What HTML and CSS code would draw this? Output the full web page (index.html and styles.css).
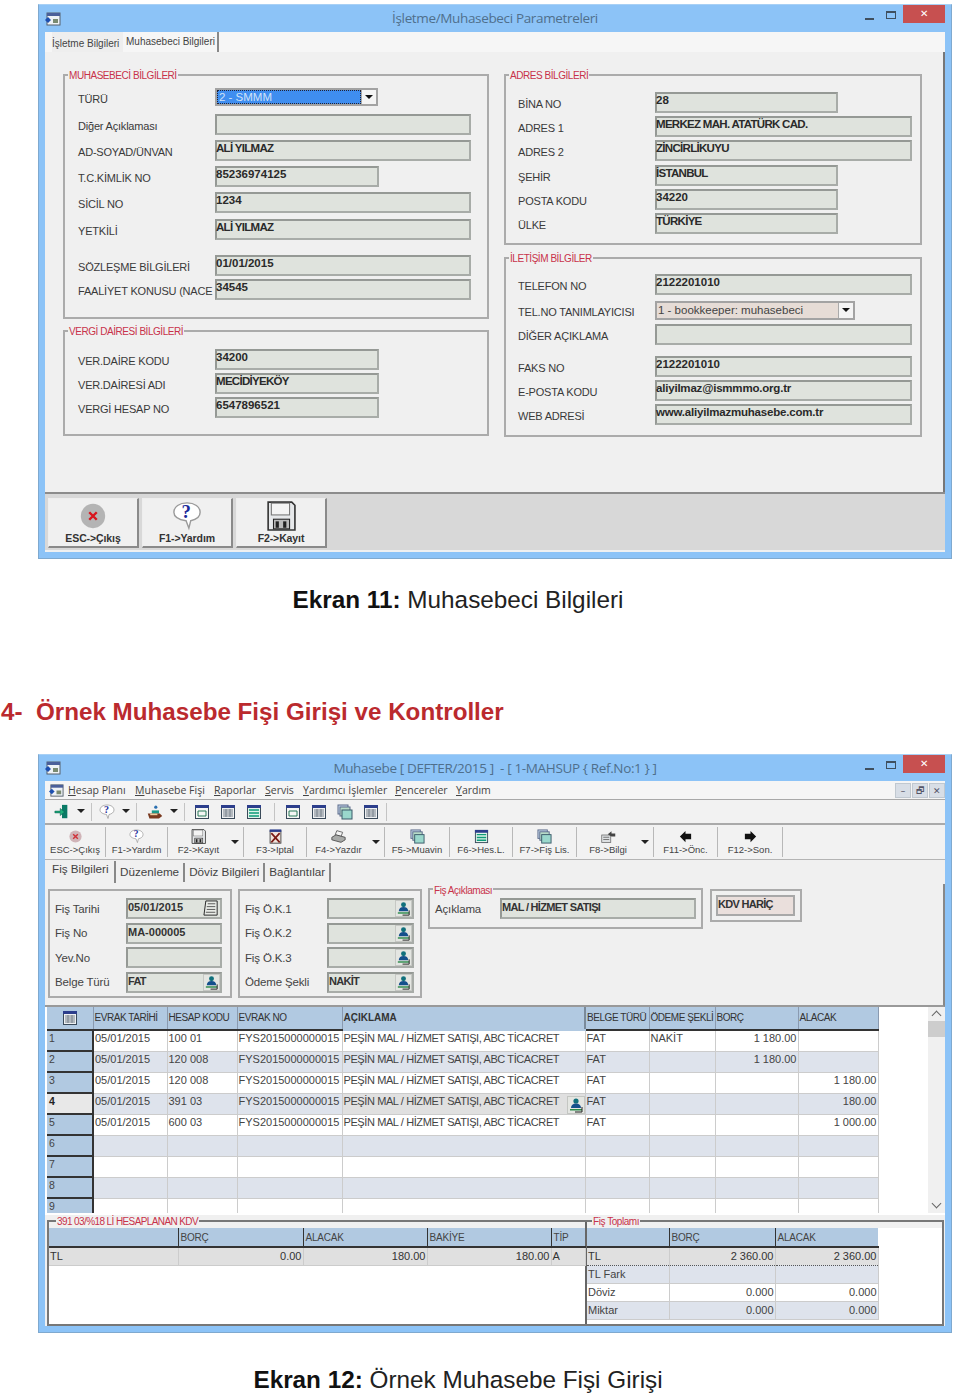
FILE: index.html
```html
<!DOCTYPE html>
<html lang="tr">
  <head>
    <meta charset="UTF-8" />
    <title>Muhasebe</title>
    <link rel="stylesheet" href="styles.css">
  </head>
  <body>
    <svg class="defs" width="0" height="0">
      <symbol id="i-app" viewBox="0 0 16 16">
        <rect x="2" y="2" width="13" height="12" fill="#eef2f6" stroke="#55606c"/>
        <rect x="2" y="2" width="13" height="3" fill="#4a5f9a"/>
        <rect x="8" y="8" width="5" height="4" fill="#7a8a70"/>
        <path d="M0 9l3-3 3 3-3 3z" fill="#1c4fb0"/>
      </symbol>
      <symbol id="i-lookup" viewBox="0 0 18 18">
        <rect x="0.5" y="0.5" width="17" height="17" fill="#e4e6e2" stroke="#c4c6c2"/>
        <circle cx="9" cy="5" r="2.6" fill="#10707c"/>
        <path d="M4 12c0-3 2-4.5 5-4.5s5 1.5 5 4.5z" fill="#14508c"/>
        <path d="M3 13h12v1.500H3z" fill="#2a8a4a"/>
        <path d="M15 11v5H8" fill="none" stroke="#222"/>
      </symbol>
      <symbol id="i-bubble" viewBox="0 0 32 32">
        <path d="M16 2c8 0 14 4 14 10 0 5-5 8-10 9l-2 8-3-8C8 20 2 17 2 12 2 6 8 2 16 2z" fill="#fff" stroke="#9a9a9a" stroke-width="1.500"/>
      </symbol>
      <symbol id="i-floppy" viewBox="0 0 28 28">
        <path d="M2 1h22l3 3v23H2z" fill="#e6e8ea" stroke="#333" stroke-width="1.500"/>
        <rect x="5" y="2" width="17" height="11" fill="#f4f4f4" stroke="#777"/>
        <rect x="7" y="17" width="15" height="9" fill="#bbb" stroke="#222"/>
        <rect x="9" y="19" width="3" height="6" fill="#222"/>
        <rect x="16" y="19" width="3" height="6" fill="#222"/>
      </symbol>
      <symbol id="i-exit" viewBox="0 0 18 18">
        <path d="M9 1h6v15H9z" fill="#0a7a66"/>
        <path d="M1 8h6V5l5 4-5 4v-3H1z" fill="#1fae7c" stroke="#075c4c" stroke-width=".6"/>
      </symbol>
      <symbol id="i-hand" viewBox="0 0 20 18">
        <circle cx="11" cy="3" r="2" fill="#2a6fb0"/>
        <path d="M6 7h9v4H6z" fill="#1c9a8a"/>
        <path d="M1 11h15l3 3-4 3H3z" fill="#7a3a20"/>
        <path d="M4 12h9" stroke="#f2d0a0" stroke-width="2"/>
      </symbol>
      <symbol id="i-form" viewBox="0 0 16 16">
        <rect x="1.500" y="1.500" width="13" height="13" fill="#f4f6f4" stroke="#3a4a5a"/>
        <rect x="1" y="1" width="14" height="3" fill="#2c3e8c"/>
        <path d="M4 7h8v5H4z" fill="none" stroke="#2a7a5a"/>
      </symbol>
      <symbol id="i-table" viewBox="0 0 16 16">
        <rect x="1.500" y="1.500" width="13" height="13" fill="#dff3ea" stroke="#3a4a5a"/>
        <rect x="1" y="1" width="14" height="3" fill="#2c3e8c"/>
        <path d="M3 6h10M3 9h10M3 12h10" stroke="#0e9a78" stroke-width="1.500"/>
      </symbol>
      <symbol id="i-sheet" viewBox="0 0 16 16">
        <rect x="1.500" y="1.500" width="13" height="13" fill="#eef0f2" stroke="#3a4a5a"/>
        <rect x="1" y="1" width="14" height="3" fill="#2c3e8c"/>
        <path d="M3 6h10M3 8h10M3 10h10M3 12h10M6 5v8M10 5v8" stroke="#77808a"/>
      </symbol>
      <symbol id="i-stack" viewBox="0 0 16 16">
        <rect x="1" y="1" width="10" height="9" fill="#c8d8ec" stroke="#5a6a8a"/>
        <rect x="3" y="3" width="10" height="9" fill="#b8dcc8" stroke="#5a6a8a"/>
        <rect x="5" y="6" width="10" height="9" fill="#9ad8cc" stroke="#3a5a6a"/>
      </symbol>
      <symbol id="i-print" viewBox="0 0 18 16">
        <path d="M7 1l7 2-2 5-7-2z" fill="#f4f4f4" stroke="#555"/>
        <path d="M1 9l5-3 11 3v3l-5 3-11-3z" fill="#a8aaa8" stroke="#444"/>
      </symbol>
      <symbol id="i-cancel" viewBox="0 0 16 18">
        <rect x="1.500" y="2" width="13" height="15" fill="#f2e4dc" stroke="#333"/>
        <rect x="1" y="0.500" width="14" height="3" fill="#2c3e8c"/>
        <path d="M3 5l10 11M13 5L3 16" stroke="#7a1a14" stroke-width="2"/>
      </symbol>
      <symbol id="i-info" viewBox="0 0 20 18">
        <rect x="1" y="7" width="12" height="10" fill="#dde0e2" stroke="#666"/>
        <path d="M3 10h8M3 13h8" stroke="#555"/>
        <path d="M9 6l5-4v3h5v4h-5" fill="#444"/>
      </symbol>
      <symbol id="i-cal" viewBox="0 0 18 18">
        <path d="M3 1h12v15H1z" fill="#e8ebe6" stroke="#222"/>
        <path d="M5 4h8M4 7h9M4 10h9M3 13h10" stroke="#555"/>
      </symbol>
    </svg>

    <!-- parametre penceresi -->
    <div class="win win-one">
      <div class="titlebar tall">
        <svg class="app-icon"><use href="#i-app"/></svg>
        <div class="title">İşletme/Muhasebeci Parametreleri</div>
        <div class="winbtns">
          <span class="wmin"></span>
          <span class="wmax"></span>
          <span class="wclose">✕</span>
        </div>
      </div>

      <div class="tabstrip">
        <span class="ptab">İşletme Bilgileri</span>
        <span class="ptab active">Muhasebeci Bilgileri</span>
      </div>

      <div class="params">
        <div class="pcol">
          <div class="fbox box-muh">
            <span class="legend">MUHASEBECİ BİLGİLERİ</span>
            <div class="frow">
              <label class="flabel">TÜRÜ</label>
              <div class="combo combo-sel"><span class="combo-val">2 - SMMM</span><span class="combo-arrow"></span></div>
            </div>
            <div class="frow mt8"><label class="flabel">Diğer Açıklaması</label><div class="field w256"></div></div>
            <div class="frow mt5"><label class="flabel">AD-SOYAD/ÜNVAN</label><div class="field w256 caps">ALİ YILMAZ</div></div>
            <div class="frow mt5"><label class="flabel">T.C.KİMLİK NO</label><div class="field w164">85236974125</div></div>
            <div class="frow mt5"><label class="flabel">SİCİL NO</label><div class="field w256">1234</div></div>
            <div class="frow mt6"><label class="flabel">YETKİLİ</label><div class="field w256 caps">ALİ YILMAZ</div></div>
            <div class="frow mt15"><label class="flabel">SÖZLEŞME BİLGİLERİ</label><div class="field w256">01/01/2015</div></div>
            <div class="frow mt3"><label class="flabel">FAALİYET KONUSU (NACE</label><div class="field w256">34545</div></div>
          </div>

          <div class="fbox box-ver">
            <span class="legend">VERGİ DAİRESİ BİLGİLERİ</span>
            <div class="frow"><label class="flabel">VER.DAİRE KODU</label><div class="field w164">34200</div></div>
            <div class="frow mt3"><label class="flabel">VER.DAİRESİ ADI</label><div class="field w164 caps">MECİDİYEKÖY</div></div>
            <div class="frow mt3"><label class="flabel">VERGİ HESAP NO</label><div class="field w164">6547896521</div></div>
          </div>
        </div>

        <div class="pcol">
          <div class="fbox box-adr">
            <span class="legend">ADRES BİLGİLERİ</span>
            <div class="frow"><label class="flabel">BİNA NO</label><div class="field w183">28</div></div>
            <div class="frow mt3"><label class="flabel">ADRES 1</label><div class="field w257 caps">MERKEZ MAH. ATATÜRK CAD.</div></div>
            <div class="frow mt3"><label class="flabel">ADRES 2</label><div class="field w257 caps">ZİNCİRLİKUYU</div></div>
            <div class="frow mt4"><label class="flabel">ŞEHİR</label><div class="field w183 caps">İSTANBUL</div></div>
            <div class="frow mt3"><label class="flabel">POSTA KODU</label><div class="field w183">34220</div></div>
            <div class="frow mt3"><label class="flabel">ÜLKE</label><div class="field w183 caps">TÜRKİYE</div></div>
          </div>

          <div class="fbox box-ilt">
            <span class="legend">İLETİŞİM BİLGİLER</span>
            <div class="frow"><label class="flabel">TELEFON NO</label><div class="field w257">2122201010</div></div>
            <div class="frow mt6">
              <label class="flabel">TEL.NO TANIMLAYICISI</label>
              <div class="combo combo-book"><span class="combo-val">1 - bookkeeper: muhasebeci</span><span class="combo-arrow"></span></div>
            </div>
            <div class="frow mt4"><label class="flabel">DİĞER AÇIKLAMA</label><div class="field w257"></div></div>
            <div class="frow mt11"><label class="flabel">FAKS NO</label><div class="field w257">2122201010</div></div>
            <div class="frow mt3"><label class="flabel">E-POSTA KODU</label><div class="field w257 lower">aliyilmaz@ismmmo.org.tr</div></div>
            <div class="frow mt3"><label class="flabel">WEB ADRESİ</label><div class="field w257 lower">www.aliyilmazmuhasebe.com.tr</div></div>
          </div>
        </div>
      </div>

      <div class="bottombar">
        <button class="bigbtn">
          <svg class="big-ico" viewBox="0 0 32 32"><circle cx="16" cy="16" r="13" fill="#b4b4b4"/><path d="M12 12l8 8M20 12l-8 8" stroke="#d8141c" stroke-width="2.600"/></svg>
          <span>ESC-&gt;Çıkış</span>
        </button>
        <button class="bigbtn">
          <svg class="big-ico" viewBox="0 0 32 32"><use href="#i-bubble" width="32" height="32"/><text x="15" y="18" class="help-mark">?</text></svg>
          <span>F1-&gt;Yardım</span>
        </button>
        <button class="bigbtn">
          <svg class="big-ico"><use href="#i-floppy"/></svg>
          <span>F2-&gt;Kayıt</span>
        </button>
      </div>
    </div>

    <p class="caption"><b>Ekran 11:</b> Muhasebeci Bilgileri</p>

    <h2 class="section">4-&nbsp; Örnek Muhasebe Fişi Girişi ve Kontroller</h2>

    <!-- fis penceresi -->
    <div class="win win-two">
      <div class="titlebar">
        <svg class="app-icon"><use href="#i-app"/></svg>
        <div class="title">Muhasebe [ DEFTER/2015 ]&nbsp; - [ 1-MAHSUP { Ref.No:1 } ]</div>
        <div class="winbtns">
          <span class="wmin"></span>
          <span class="wmax"></span>
          <span class="wclose">✕</span>
        </div>
      </div>

      <div class="menubar">
        <svg class="menu-icon"><use href="#i-app"/></svg>
        <span class="mitem m-hesap"><u>H</u>esap Planı</span>
        <span class="mitem m-fis"><u>M</u>uhasebe Fişi</span>
        <span class="mitem m-rap"><u>R</u>aporlar</span>
        <span class="mitem m-ser"><u>S</u>ervis</span>
        <span class="mitem m-yar"><u>Y</u>ardımcı İşlemler</span>
        <span class="mitem m-pen"><u>P</u>encereler</span>
        <span class="mitem"><u>Y</u>ardım</span>
        <div class="mdi-btns"><span>–</span><span>🗗</span><span>✕</span></div>
      </div>

      <div class="toolbar-one">
        <span class="tool"><svg class="ico16"><use href="#i-exit"/></svg></span>
        <span class="tool-arrow"></span><span class="tsep"></span>
        <span class="tool"><svg class="ico16" viewBox="0 0 32 32"><use href="#i-bubble" width="32" height="32"/><text x="15" y="18" class="help-mark">?</text></svg></span>
        <span class="tool-arrow"></span><span class="tsep"></span>
        <span class="tool tool-hand"><svg class="ico16"><use href="#i-hand"/></svg></span>
        <span class="tool-arrow"></span><span class="tsep tsep-a"></span>
        <span class="tool"><svg class="ico16"><use href="#i-form"/></svg></span>
        <span class="tool"><svg class="ico16"><use href="#i-sheet"/></svg></span>
        <span class="tool"><svg class="ico16"><use href="#i-table"/></svg></span><span class="tsep tsep-b"></span>
        <span class="tool"><svg class="ico16"><use href="#i-form"/></svg></span>
        <span class="tool"><svg class="ico16"><use href="#i-sheet"/></svg></span>
        <span class="tool"><svg class="ico16"><use href="#i-stack"/></svg></span>
        <span class="tool"><svg class="ico16"><use href="#i-sheet"/></svg></span><span class="tsep"></span>
      </div>

      <div class="toolbar-two">
        <div class="tbtn"><div class="tbtn-in"><svg class="ico14" viewBox="0 0 16 16"><circle cx="8" cy="8" r="6.500" fill="#d0b4b8"/><path d="M5.500 5.500l5 5M10.500 5.500l-5 5" stroke="#d03038" stroke-width="1.500"/></svg><span>ESC-&gt;Çıkış</span></div></div>
        <div class="tbtn"><div class="tbtn-in"><svg class="ico14" viewBox="0 0 32 32"><use href="#i-bubble" width="32" height="32"/><text x="15" y="18" class="help-mark">?</text></svg><span>F1-&gt;Yardım</span></div></div>
        <div class="tbtn"><div class="tbtn-in"><svg class="ico14"><use href="#i-floppy"/></svg><span>F2-&gt;Kayıt</span></div><span class="tool-arrow"></span></div>
        <div class="tbtn"><div class="tbtn-in"><svg class="ico14"><use href="#i-cancel"/></svg><span>F3-&gt;Iptal</span></div></div>
        <div class="tbtn"><div class="tbtn-in"><svg class="ico14"><use href="#i-print"/></svg><span>F4-&gt;Yazdır</span></div><span class="tool-arrow"></span></div>
        <div class="tbtn"><div class="tbtn-in"><svg class="ico14"><use href="#i-stack"/></svg><span>F5-&gt;Muavin</span></div></div>
        <div class="tbtn"><div class="tbtn-in"><svg class="ico14"><use href="#i-table"/></svg><span>F6-&gt;Hes.L.</span></div></div>
        <div class="tbtn"><div class="tbtn-in"><svg class="ico14"><use href="#i-stack"/></svg><span>F7-&gt;Fiş Lis.</span></div></div>
        <div class="tbtn"><div class="tbtn-in"><svg class="ico14"><use href="#i-info"/></svg><span>F8-&gt;Bilgi</span></div><span class="tool-arrow"></span></div>
        <div class="tbtn"><div class="tbtn-in"><svg class="ico14" viewBox="0 0 16 16"><path d="M2 8l6-6v3h6v6H8v3z" fill="#111"/></svg><span>F11-&gt;Önc.</span></div></div>
        <div class="tbtn"><div class="tbtn-in"><svg class="ico14" viewBox="0 0 16 16"><path d="M14 8L8 2v3H2v6h6v3z" fill="#111"/></svg><span>F12-&gt;Son.</span></div></div>
      </div>

      <div class="tabs-two">
        <span class="ttab active">Fiş Bilgileri</span>
        <span class="ttab">Düzenleme</span>
        <span class="ttab">Döviz Bilgileri</span>
        <span class="ttab">Bağlantılar</span>
      </div>

      <div class="fis-form">
        <div class="gbox gbox-a">
          <div class="grow"><label class="glabel">Fiş Tarihi</label><div class="gfield">05/01/2015<svg class="pick"><use href="#i-cal"/></svg></div></div>
          <div class="grow"><label class="glabel">Fiş No</label><div class="gfield">MA-000005</div></div>
          <div class="grow"><label class="glabel">Yev.No</label><div class="gfield"></div></div>
          <div class="grow"><label class="glabel">Belge Türü</label><div class="gfield caps">FAT<svg class="pick"><use href="#i-lookup"/></svg></div></div>
        </div>
        <div class="gbox gbox-b">
          <div class="grow"><label class="glabel">Fiş Ö.K.1</label><div class="gfield"><svg class="pick"><use href="#i-lookup"/></svg></div></div>
          <div class="grow"><label class="glabel">Fiş Ö.K.2</label><div class="gfield"><svg class="pick"><use href="#i-lookup"/></svg></div></div>
          <div class="grow"><label class="glabel">Fiş Ö.K.3</label><div class="gfield"><svg class="pick"><use href="#i-lookup"/></svg></div></div>
          <div class="grow"><label class="glabel">Ödeme Şekli</label><div class="gfield caps">NAKİT<svg class="pick"><use href="#i-lookup"/></svg></div></div>
        </div>
        <div class="gbox gbox-c">
          <span class="legend legend-thin">Fiş Açıklaması</span>
          <div class="grow"><label class="glabel glabel-c">Açıklama</label><div class="gfield gfield-c caps">MAL / HİZMET SATIŞI</div></div>
        </div>
        <div class="gbox gbox-d"><div class="gfield kdv caps">KDV HARİÇ</div></div>
      </div>

      <div class="grid-wrap">
        <table class="vgrid">
          <colgroup><col class="c-h"><col class="c-a"><col class="c-b"><col class="c-c"><col class="c-d"><col class="c-e"><col class="c-f"><col class="c-g"><col class="c-i"></colgroup>
          <thead>
            <tr>
              <th class="corner"><svg class="ico16"><use href="#i-sheet"/></svg></th>
              <th>EVRAK TARİHİ</th><th>HESAP KODU</th><th>EVRAK NO</th><th class="sorted">AÇIKLAMA</th><th>BELGE TÜRÜ</th><th>ÖDEME ŞEKLİ</th><th>BORÇ</th><th>ALACAK</th>
            </tr>
          </thead>
          <tbody>
            <tr><th>1</th><td>05/01/2015</td><td>100 01</td><td>FYS2015000000015</td><td class="desc">PEŞİN MAL / HİZMET SATIŞI, ABC TİCACRET</td><td>FAT</td><td>NAKİT</td><td class="num">1 180.00</td><td></td></tr>
            <tr class="alt"><th>2</th><td>05/01/2015</td><td>120 008</td><td>FYS2015000000015</td><td class="desc">PEŞİN MAL / HİZMET SATIŞI, ABC TİCACRET</td><td>FAT</td><td></td><td class="num">1 180.00</td><td></td></tr>
            <tr><th>3</th><td>05/01/2015</td><td>120 008</td><td>FYS2015000000015</td><td class="desc">PEŞİN MAL / HİZMET SATIŞI, ABC TİCACRET</td><td>FAT</td><td></td><td></td><td class="num">1 180.00</td></tr>
            <tr class="alt"><th class="current">4</th><td>05/01/2015</td><td>391 03</td><td>FYS2015000000015</td><td class="desc editing">PEŞİN MAL / HİZMET SATIŞI, ABC TİCACRET<svg class="cell-pick"><use href="#i-lookup"/></svg></td><td>FAT</td><td></td><td></td><td class="num">180.00</td></tr>
            <tr><th>5</th><td>05/01/2015</td><td>600 03</td><td>FYS2015000000015</td><td class="desc">PEŞİN MAL / HİZMET SATIŞI, ABC TİCACRET</td><td>FAT</td><td></td><td></td><td class="num">1 000.00</td></tr>
            <tr class="alt"><th>6</th><td></td><td></td><td></td><td></td><td></td><td></td><td></td><td></td></tr>
            <tr><th>7</th><td></td><td></td><td></td><td></td><td></td><td></td><td></td><td></td></tr>
            <tr class="alt"><th>8</th><td></td><td></td><td></td><td></td><td></td><td></td><td></td><td></td></tr>
            <tr class="short"><th>9</th><td></td><td></td><td></td><td></td><td></td><td></td><td></td><td></td></tr>
          </tbody>
        </table>
        <div class="scrollbar">
          <span class="sb-up"></span>
          <span class="sb-thumb"></span>
          <span class="sb-down"></span>
        </div>
      </div>

      <div class="totals-wrap">
        <div class="totals">
          <div class="tot-left">
            <span class="legend legend-kdv">391 03/%18 Lİ HESAPLANAN KDV</span>
            <div class="band"></div>
            <table class="tgrid tgrid-left">
              <colgroup><col class="l-a"><col class="l-b"><col class="l-c"><col class="l-d"><col class="l-e"></colgroup>
              <thead><tr><th></th><th>BORÇ</th><th>ALACAK</th><th>BAKİYE</th><th>TİP</th></tr></thead>
              <tbody><tr class="sum"><td>TL</td><td class="num">0.00</td><td class="num">180.00</td><td class="num">180.00</td><td>A</td></tr></tbody>
            </table>
          </div>
          <div class="tot-right">
            <span class="legend legend-top">Fiş Toplamı</span>
            <div class="band"></div>
            <table class="tgrid tgrid-right">
              <colgroup><col class="r-a"><col class="r-b"><col class="r-c"></colgroup>
              <thead><tr><th></th><th>BORÇ</th><th>ALACAK</th></tr></thead>
              <tbody>
                <tr class="sum dotted"><td>TL</td><td class="num">2 360.00</td><td class="num">2 360.00</td></tr>
                <tr class="alt"><td>TL Fark</td><td></td><td></td></tr>
                <tr><td>Döviz</td><td class="num">0.000</td><td class="num">0.000</td></tr>
                <tr class="alt"><td>Miktar</td><td class="num">0.000</td><td class="num">0.000</td></tr>
              </tbody>
            </table>
          </div>
        </div>
      </div>
    </div>

    <p class="caption caption-two"><b>Ekran 12:</b> Örnek Muhasebe Fişi Girişi</p>
  </body>
</html>
```

FILE: styles.css
```css
* {
  box-sizing: border-box;
}

body {
  margin: 0;
  background-color: #fff;
  font-family: "Liberation Sans", Arial, sans-serif;
  color: #333;
}

.defs {
  position: absolute;
}

.help-mark {
  font: bold 20px "Liberation Serif", serif;
  fill: #1a2a9a;
  text-anchor: middle;
}

/* pencere */
.win {
  width: 914px;
  margin-left: 38px;
  padding: 0 6px 7px;
  background-color: #8cc3f7;
  border: 1px solid #7fa9cf;
  border-top-color: #a8d0f5;
}

.win-one {
  margin-top: 4px;
  height: 555px;
  padding-bottom: 6px;
  display: flex;
  flex-direction: column;
}

.win-two {
  height: 579px;
}

.titlebar {
  height: 26px;
  display: grid;
  grid-template-columns: 1fr auto 1fr;
  align-items: center;
}

.titlebar.tall {
  height: 27px;
}

.titlebar.tall .title {
  padding-bottom: 2px;
}

.app-icon {
  width: 16px;
  height: 16px;
}

.title {
  font-family: "Open Sans", sans-serif;
  font-size: 13.500px;
  letter-spacing: -0.35px;
  color: #4f6f8c;
  white-space: nowrap;
}

.winbtns {
  justify-self: end;
  align-self: start;
  display: flex;
  align-items: flex-start;
}

.wmin {
  width: 9px;
  height: 2px;
  margin: 13px 12px 0 0;
  background-color: #3f4f5f;
}

.wmax {
  width: 10px;
  height: 8px;
  margin: 6px 7px 0 0;
  border: 1px solid #3f4f5f;
  border-top-width: 2px;
}

.wclose {
  width: 42px;
  height: 18px;
  background-color: #c75050;
  color: #fff;
  font-size: 10px;
  line-height: 18px;
  text-align: center;
}

/* parametre sekmeleri */
.tabstrip {
  height: 20px;
  display: flex;
  background-color: #f6f6f6;
  padding-left: 7px;
  font-size: 10px;
  color: #444;
}

.ptab {
  width: 71px;
  padding-top: 6px;
  white-space: nowrap;
  background-color: #eee;
}

.ptab.active {
  width: 96px;
  padding: 4px 0 0 3px;
  background-color: #f6f6f6;
  border-right: 2px solid #888;
}

.params {
  flex: 1;
  display: grid;
  grid-template-columns: 426px 418px;
  column-gap: 15px;
  align-content: start;
  padding: 22px 0 0 18px;
  background-color: #f0f0f0;
  border-right: 2px solid #777;
}

.pcol {
  display: flex;
  flex-direction: column;
  gap: 11px;
}

.fbox {
  position: relative;
  border: 2px solid #ababab;
  padding-left: 13px;
}

.box-muh {
  height: 245px;
  padding-top: 12px;
}

.box-ver {
  height: 106px;
  padding-top: 17px;
}

.box-adr {
  height: 171px;
  padding: 16px 0 0 12px;
}

.box-ilt {
  height: 180px;
  margin-top: 1px;
  padding: 15px 0 0 12px;
}

.legend {
  position: absolute;
  top: -6px;
  left: 3px;
  padding: 0 1px;
  background-color: #f0f0f0;
  color: #c8324a;
  font-size: 10px;
  letter-spacing: -0.45px;
  line-height: 12px;
  white-space: nowrap;
}

.frow {
  display: flex;
  align-items: center;
}

.mt3 { margin-top: 3px; }
.mt4 { margin-top: 4px; }
.mt5 { margin-top: 5px; }
.mt6 { margin-top: 6px; }
.mt8 { margin-top: 8px; }
.mt11 { margin-top: 11px; }
.mt15 { margin-top: 15px; }

.flabel {
  width: 137px;
  flex: none;
  padding-top: 3px;
  font-size: 11px;
  letter-spacing: -0.2px;
  color: #3a3a3a;
  white-space: nowrap;
}

.field {
  height: 21px;
  padding: 0;
  text-indent: -1px;
  background-color: #dfe3dd;
  border: 2px solid #a8aca8;
  border-top-color: #959995;
  border-left-color: #959995;
  font-size: 11.500px;
  font-weight: bold;
  line-height: 13px;
  color: #2a2a2a;
  white-space: nowrap;
}

.caps {
  letter-spacing: -0.7px;
}

.lower {
  letter-spacing: -0.2px;
}

.w164 { width: 164px; }
.w183 { width: 183px; }
.w256 { width: 256px; }
.w257 { width: 257px; }

.combo {
  height: 18px;
  display: flex;
  background-color: #eee;
  border: 2px solid #a3a3a3;
  font-size: 11.500px;
}

.combo-sel {
  width: 163px;
}

.combo-book {
  width: 200px;
  height: 19px;
}

.combo-val {
  flex: 1;
  padding: 1px 0 0 1px;
  white-space: nowrap;
}

.combo-sel .combo-val {
  background-color: #3f8ef0;
  color: #cfe2f7;
  border: 1px dotted #223;
  padding-top: 0;
}

.combo-book .combo-val {
  background-color: #e6dcd6;
  color: #444;
}

.combo-arrow {
  width: 15px;
  position: relative;
  background-color: #f4f4f4;
  border-left: 1px solid #aaa;
}

.combo-arrow::after {
  content: "";
  position: absolute;
  top: 5px;
  left: 3px;
  border: 4px solid transparent;
  border-top-color: #111;
}

/* alt tuslar */
.bottombar {
  height: 60px;
  flex: none;
  display: flex;
  gap: 3px;
  padding: 4px 0 0 3px;
  background-color: #d8d8d8;
  border-top: 2px solid #8c8c8c;
  border-bottom: 2px solid #f0f0f0;
}

.bigbtn {
  width: 91px;
  height: 50px;
  padding: 2px 0 0;
  display: flex;
  flex-direction: column;
  align-items: center;
  background-color: #f0f0f0;
  border: 1px solid #eee;
  border-right: 2px solid #8a8a8a;
  border-bottom: 2px solid #8a8a8a;
  font-family: inherit;
  font-size: 10.500px;
  font-weight: bold;
  letter-spacing: -0.1px;
  color: #333;
}

.big-ico {
  width: 30px;
  height: 30px;
  margin-bottom: 1px;
}

/* basliklar */
.caption {
  width: 916px;
  margin: 27px 0 0;
  font-size: 24.300px;
  line-height: 28px;
  text-align: center;
  color: #222;
}

.caption b {
  color: #111;
}

.caption-two {
  margin-top: 33px;
}

.section {
  margin: 84px 0 28px;
  padding-left: 1px;
  font-size: 24.200px;
  line-height: 28px;
  color: #bb2a2e;
}

/* fis menu ve araclar */
.menubar {
  position: relative;
  height: 19px;
  display: flex;
  align-items: center;
  padding-left: 4px;
  background-color: #f5f5f5;
  border-bottom: 1px solid #a8a8a8;
  font-family: "Open Sans", sans-serif;
  font-size: 10.500px;
  color: #444;
  white-space: nowrap;
}

.menu-icon {
  width: 15px;
  height: 15px;
  margin-right: 4px;
}

.mitem {
  flex: none;
}

.m-hesap { width: 67px; }
.m-fis { width: 79px; }
.m-rap { width: 51px; }
.m-ser { width: 38px; }
.m-yar { width: 92px; }
.m-pen { width: 61px; }

.mdi-btns {
  margin-left: auto;
  display: flex;
  gap: 1px;
}

.mdi-btns span {
  width: 16px;
  height: 15px;
  background-color: #d8dee6;
  border: 1px solid #c0c8d0;
  color: #556;
  font-size: 9px;
  line-height: 13px;
  text-align: center;
}

.toolbar-one {
  height: 25px;
  display: flex;
  align-items: center;
  padding-left: 4px;
  background-color: #f2f2f2;
  border-bottom: 2px solid #aaa;
}

.tool {
  width: 26px;
  flex: none;
  display: flex;
  justify-content: center;
}

.tool-hand {
  margin-left: 3px;
}

.tool-arrow {
  width: 8px;
  height: 5px;
  flex: none;
  margin: 0 4px 0 2px;
  border: 4px solid transparent;
  border-top-color: #222;
  border-bottom-width: 0;
}

.tsep {
  width: 1px;
  height: 18px;
  flex: none;
  margin: 0 2px;
  background-color: #c4c4c4;
}

.tsep-a {
  margin: 0 4px 0 2px;
}

.tsep-b {
  margin: 0 5px 0 7px;
}

.ico16 {
  width: 16px;
  height: 16px;
}

.ico14 {
  width: 15px;
  height: 15px;
}

.toolbar-two {
  height: 35px;
  display: grid;
  grid-template-columns: 61px 62px 76px 63px 78px 65px 63px 64px 77px 64px 65px;
  background-color: #f2f2f2;
  border-bottom: 1px solid #b4b4b4;
}

.tbtn {
  height: 30px;
  margin-top: 2px;
  display: flex;
  align-items: center;
  border-right: 1px solid #b8b8b8;
}

.tbtn-in {
  flex: 1;
  display: flex;
  flex-direction: column;
  align-items: center;
  font-size: 9.500px;
  color: #444;
  white-space: nowrap;
}

.tabs-two {
  height: 24px;
  display: flex;
  align-items: center;
  padding-left: 7px;
  background-color: #f0f0f0;
  font-size: 11.700px;
  color: #444;
}

.ttab {
  height: 19px;
  padding: 2px 4px 0;
  border-right: 2px solid #888;
  white-space: nowrap;
}

.ttab.active {
  width: 64px;
  height: 22px;
  padding: 1px 0 0 0;
}

/* fis formu */
.fis-form {
  height: 123px;
  display: flex;
  align-items: flex-start;
  padding: 5px 0 0 3px;
  background-color: #f0f0f0;
  border-right: 2px solid #888;
  border-bottom: 2px solid #999;
}

.gbox {
  position: relative;
  border: 2px solid #ababab;
}

.gbox-a,
.gbox-b {
  width: 184px;
  height: 109px;
  margin-right: 6px;
  padding: 7px 0 0 5px;
}

.gbox-c {
  width: 275px;
  height: 41px;
  margin-top: -1px;
  padding: 8px 0 0 5px;
}

.gbox-d {
  width: 92px;
  height: 33px;
  margin-left: 7px;
  padding: 4px 0 0 4px;
}

.grow {
  height: 21px;
  margin-bottom: 3.500px;
  display: flex;
  align-items: center;
}

.glabel {
  width: 71px;
  flex: none;
  font-size: 11.500px;
  letter-spacing: -0.15px;
  color: #444;
  white-space: nowrap;
}

.glabel-c {
  width: 65px;
}

.gfield {
  width: 96px;
  height: 21px;
  position: relative;
  padding: 0;
  background-color: #dfe3dd;
  border: 2px solid #a8aca8;
  border-top-color: #959995;
  border-left-color: #959995;
  font-size: 11px;
  font-weight: bold;
  line-height: 14px;
  color: #333;
  white-space: nowrap;
}

.gbox-b .gfield {
  width: 87px;
  margin-left: 11px;
}

.gfield-c {
  width: 196px;
  margin-left: 0;
}

.kdv {
  width: 79px;
  background-color: #eadfdc;
  border-color: #a8a8a8;
}

.pick {
  position: absolute;
  right: 0;
  top: 0;
  width: 17px;
  height: 17px;
}

.gbox-c .legend {
  top: -5px;
  left: 3px;
}

.legend-thin {
  font-size: 10px;
}

/* liste */
.grid-wrap {
  height: 208px;
  display: flex;
  padding-left: 2px;
  background-color: #fff;
}

.vgrid {
  width: 831px;
  height: 206px;
  table-layout: fixed;
  border-collapse: collapse;
  font-size: 11px;
}

.c-h { width: 46px; }
.c-a { width: 74px; }
.c-b { width: 70px; }
.c-c { width: 105px; }
.c-d { width: 243px; }
.c-e { width: 64px; }
.c-f { width: 66px; }
.c-g { width: 83px; }
.c-i { width: 80px; }

.vgrid thead th {
  height: 23px;
  padding: 0 0 2px 1px;
  overflow: hidden;
  background-color: #b1c9e1;
  border-right: 1px solid #8a9ab0;
  border-bottom: 2px solid #333;
  border-left: 1px solid #3a4a5a;
  font-size: 10px;
  font-weight: normal;
  letter-spacing: -0.45px;
  text-align: left;
  color: #333;
  white-space: nowrap;
}

.vgrid thead th.corner {
  padding: 2px 0 0;
  text-align: center;
  border-left: 0;
}

.vgrid thead th.sorted {
  font-weight: bold;
  letter-spacing: 0;
  border-bottom-color: #b1c9e1;
  border-right: 2px solid #7a8a9a;
}

.vgrid tbody th {
  height: 21px;
  padding: 1px 0 0 2px;
  vertical-align: top;
  background-color: #b1c9e1;
  border-right: 2px solid #333;
  border-bottom: 2px solid #333;
  font-size: 10.500px;
  font-weight: normal;
  text-align: left;
  color: #444;
}

.vgrid tbody th.current {
  background-color: #e8e8e8;
  font-weight: bold;
  color: #222;
}

.vgrid td {
  height: 21px;
  padding: 1px 1px 0;
  vertical-align: top;
  border-right: 1px solid #ccc;
  border-bottom: 1px solid #ccc;
  white-space: nowrap;
  overflow: hidden;
  color: #444;
}

.vgrid td.desc {
  letter-spacing: -0.4px;
}

.vgrid .alt td {
  background-color: #dee3ec;
}

.vgrid .alt td.editing {
  position: relative;
  background-color: #e0e0e0;
}

.vgrid .short th,
.vgrid .short td {
  height: 15px;
  border-bottom: 0;
}

.cell-pick {
  position: absolute;
  top: 2px;
  right: 0;
  width: 18px;
  height: 18px;
}

.num {
  text-align: right;
}

.scrollbar {
  width: 17px;
  height: 206px;
  margin-left: auto;
  display: flex;
  flex-direction: column;
  background-color: #f0f0f0;
}

.sb-up,
.sb-down {
  height: 14px;
  position: relative;
}

.sb-up::after,
.sb-down::after {
  content: "";
  position: absolute;
  top: 5px;
  left: 5px;
  width: 6px;
  height: 6px;
  border-left: 1px solid #666;
  border-top: 1px solid #666;
  transform: rotate(45deg);
}

.sb-down {
  margin-top: auto;
}

.sb-down::after {
  top: 1px;
  transform: rotate(225deg);
}

.sb-thumb {
  height: 16px;
  background-color: #cdcdcd;
}

/* toplamlar */
.totals-wrap {
  padding: 5px 1px 0 2px;
  background-color: #f0f0f0;
}

.totals {
  height: 106px;
  display: flex;
  background-color: #fff;
  border: 2px solid #777;
}

.tot-left {
  width: 538px;
  position: relative;
  border-right: 2px solid #666;
}

.tot-right {
  flex: 1;
  position: relative;
}

.band {
  height: 6px;
  background-color: #f0f0f0;
}

.legend-kdv {
  top: -6px;
  left: 7px;
  letter-spacing: -0.6px;
}

.legend-top {
  top: -6px;
  left: 5px;
}

.tgrid {
  table-layout: fixed;
  border-collapse: collapse;
  font-size: 11px;
  color: #444;
}

.tgrid-left {
  width: 536px;
}

.tgrid-right {
  width: 291px;
}

.l-a { width: 129px; }
.l-b { width: 125px; }
.l-c { width: 124px; }
.l-d { width: 124px; }
.l-e { width: 34px; }

.r-a { width: 82px; }
.r-b { width: 106px; }
.r-c { width: 103px; }

.tgrid th {
  height: 19px;
  padding: 0 0 0 2px;
  background-color: #b1c9e1;
  border-left: 1px solid #333;
  border-bottom: 2px solid #333;
  font-size: 10px;
  font-weight: normal;
  letter-spacing: -0.2px;
  text-align: left;
}

.tgrid th:first-child {
  border-left: 0;
}

.tgrid td {
  height: 18px;
  padding: 0 1px;
  border-right: 1px solid #ccc;
  border-bottom: 1px solid #ccc;
}

.tgrid .sum td {
  background-color: #e0e0e0;
  color: #333;
}

.tgrid .dotted td {
  border-bottom: 1px dotted #555;
}

.tgrid .alt td {
  background-color: #dee3ec;
}
```
